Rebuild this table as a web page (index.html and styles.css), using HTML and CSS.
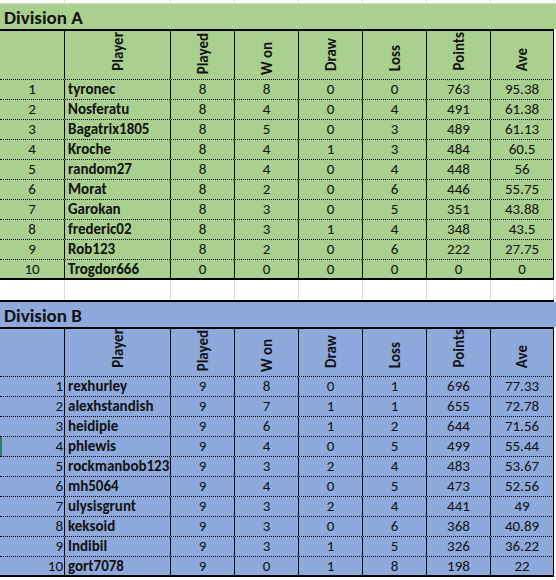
FILE: index.html
```html
<!DOCTYPE html>
<html lang="en">
<head>
<meta charset="utf-8">
<title>Divisions</title>
<link rel="stylesheet" href="styles.css">
</head>
<body>
<div class="sheet">
  <div class="gridrow top"><span></span><span></span><span></span><span></span><span></span><span></span><span></span><span></span></div>

  <section class="division green">
    <div class="title">Division A</div>
    <div class="table">
      <div class="row head">
        <div class="c"></div>
        <div class="c"><span class="vt">Player</span></div>
        <div class="c"><span class="vt low">Played</span></div>
        <div class="c"><span class="vt lower">W on</span></div>
        <div class="c"><span class="vt">Draw</span></div>
        <div class="c"><span class="vt">Loss</span></div>
        <div class="c"><span class="vt">Points</span></div>
        <div class="c"><span class="vt">Ave</span></div>
      </div>
      <div class="row"><div class="c rank">1</div><div class="c name">tyronec</div><div class="c">8</div><div class="c">8</div><div class="c">0</div><div class="c">0</div><div class="c">763</div><div class="c">95.38</div></div>
      <div class="row"><div class="c rank">2</div><div class="c name">Nosferatu</div><div class="c">8</div><div class="c">4</div><div class="c">0</div><div class="c">4</div><div class="c">491</div><div class="c">61.38</div></div>
      <div class="row"><div class="c rank">3</div><div class="c name">Bagatrix1805</div><div class="c">8</div><div class="c">5</div><div class="c">0</div><div class="c">3</div><div class="c">489</div><div class="c">61.13</div></div>
      <div class="row"><div class="c rank">4</div><div class="c name">Kroche</div><div class="c">8</div><div class="c">4</div><div class="c">1</div><div class="c">3</div><div class="c">484</div><div class="c">60.5</div></div>
      <div class="row"><div class="c rank">5</div><div class="c name">random27</div><div class="c">8</div><div class="c">4</div><div class="c">0</div><div class="c">4</div><div class="c">448</div><div class="c">56</div></div>
      <div class="row"><div class="c rank">6</div><div class="c name">Morat</div><div class="c">8</div><div class="c">2</div><div class="c">0</div><div class="c">6</div><div class="c">446</div><div class="c">55.75</div></div>
      <div class="row"><div class="c rank">7</div><div class="c name">Garokan</div><div class="c">8</div><div class="c">3</div><div class="c">0</div><div class="c">5</div><div class="c">351</div><div class="c">43.88</div></div>
      <div class="row"><div class="c rank">8</div><div class="c name">frederic02</div><div class="c">8</div><div class="c">3</div><div class="c">1</div><div class="c">4</div><div class="c">348</div><div class="c">43.5</div></div>
      <div class="row"><div class="c rank">9</div><div class="c name">Rob123</div><div class="c">8</div><div class="c">2</div><div class="c">0</div><div class="c">6</div><div class="c">222</div><div class="c">27.75</div></div>
      <div class="row last"><div class="c rank">10</div><div class="c name">Trogdor666</div><div class="c">0</div><div class="c">0</div><div class="c">0</div><div class="c">0</div><div class="c">0</div><div class="c">0</div></div>
    </div>
  </section>

  <div class="gridrow spacer"><span></span><span></span><span></span><span></span><span></span><span></span><span></span><span></span></div>

  <section class="division blue">
    <div class="title">Division B</div>
    <div class="table">
      <div class="row head">
        <div class="c"></div>
        <div class="c"><span class="vt">Player</span></div>
        <div class="c"><span class="vt low">Played</span></div>
        <div class="c"><span class="vt lower">W on</span></div>
        <div class="c"><span class="vt">Draw</span></div>
        <div class="c"><span class="vt">Loss</span></div>
        <div class="c"><span class="vt">Points</span></div>
        <div class="c"><span class="vt">Ave</span></div>
      </div>
      <div class="row"><div class="c rank">1</div><div class="c name">rexhurley</div><div class="c">9</div><div class="c">8</div><div class="c">0</div><div class="c">1</div><div class="c">696</div><div class="c">77.33</div></div>
      <div class="row"><div class="c rank">2</div><div class="c name">alexhstandish</div><div class="c">9</div><div class="c">7</div><div class="c">1</div><div class="c">1</div><div class="c">655</div><div class="c">72.78</div></div>
      <div class="row"><div class="c rank">3</div><div class="c name">heidipie</div><div class="c">9</div><div class="c">6</div><div class="c">1</div><div class="c">2</div><div class="c">644</div><div class="c">71.56</div></div>
      <div class="row marked"><div class="c rank">4</div><div class="c name">phlewis</div><div class="c">9</div><div class="c">4</div><div class="c">0</div><div class="c">5</div><div class="c">499</div><div class="c">55.44</div></div>
      <div class="row"><div class="c rank">5</div><div class="c name">rockmanbob123</div><div class="c">9</div><div class="c">3</div><div class="c">2</div><div class="c">4</div><div class="c">483</div><div class="c">53.67</div></div>
      <div class="row"><div class="c rank">6</div><div class="c name">mh5064</div><div class="c">9</div><div class="c">4</div><div class="c">0</div><div class="c">5</div><div class="c">473</div><div class="c">52.56</div></div>
      <div class="row"><div class="c rank">7</div><div class="c name">ulysisgrunt</div><div class="c">9</div><div class="c">3</div><div class="c">2</div><div class="c">4</div><div class="c">441</div><div class="c">49</div></div>
      <div class="row"><div class="c rank">8</div><div class="c name">keksoid</div><div class="c">9</div><div class="c">3</div><div class="c">0</div><div class="c">6</div><div class="c">368</div><div class="c">40.89</div></div>
      <div class="row"><div class="c rank">9</div><div class="c name">Indibil</div><div class="c">9</div><div class="c">3</div><div class="c">1</div><div class="c">5</div><div class="c">326</div><div class="c">36.22</div></div>
      <div class="row last"><div class="c rank">10</div><div class="c name">gort7078</div><div class="c">9</div><div class="c">0</div><div class="c">1</div><div class="c">8</div><div class="c">198</div><div class="c">22</div></div>
    </div>
  </section>
</div>
</body>
</html>
```

FILE: styles.css
```css
html, body {
  margin: 0;
  padding: 0;
  background: #ffffff;
}

.sheet {
  width: 556px;
  height: 580px;
  overflow: hidden;
  font-family: "Carlito", "Lato", "Liberation Sans", sans-serif;
  font-size: 15px;
  color: #111;
}

/* Empty spreadsheet rows with light gridlines */
.gridrow {
  display: grid;
  grid-template-columns: 65px 106px 64px 64px 64px 64px 64px 63px;
  width: 556px;
  box-sizing: border-box;
}
.gridrow span {
  border-right: 1px solid #dadada;
}
.gridrow.top {
  height: 4px;
  border-bottom: 1px solid #d4d4d4;
}
.gridrow.spacer {
  height: 20px;
}

.division.green { --fill: #a9d08e; }
.division.blue { --fill: #8ea9db; }

.division.blue::before {
  content: "";
  display: block;
  width: 554px;
  height: 2px;
  background: #000;
}

.title {
  height: 25px;
  background: var(--fill);
  font-weight: 700;
  font-size: 19px;
  line-height: 27px;
  padding-left: 4px;
  color: #111;
}

.table {
  width: 554px;
  border-top: 2px solid #000;
  background: var(--fill);
}

.row {
  display: grid;
  grid-template-columns: 65px 106px 64px 64px 64px 64px 64px 63px;
  height: 20px;
  box-sizing: border-box;
  border-bottom: 1px dotted #000;
}
.row.head {
  height: 49px;
}
.blue .row.head {
  height: 48px;
}
.row.last {
  border-bottom: 2px solid #000;
}
.row.marked {
  box-shadow: inset 2px 0 0 #2f7d62;
}

.c {
  border-right: 1px solid #000;
  text-align: center;
  line-height: 19px;
  white-space: nowrap;
  overflow: hidden;
}

.c.name {
  text-align: left;
  font-weight: 700;
  padding-left: 3px;
}

.blue .c.rank {
  text-align: right;
  padding-right: 1px;
}

.head .c {
  display: flex;
  justify-content: center;
  align-items: flex-end;
  padding-bottom: 8px;
  box-sizing: border-box;
}

.vt {
  writing-mode: vertical-rl;
  transform: rotate(180deg);
  font-weight: 700;
  font-size: 15px;
  line-height: 18px;
}
.vt.low {
  margin-bottom: -3px;
}
.vt.lower {
  margin-bottom: -4px;
}
```
